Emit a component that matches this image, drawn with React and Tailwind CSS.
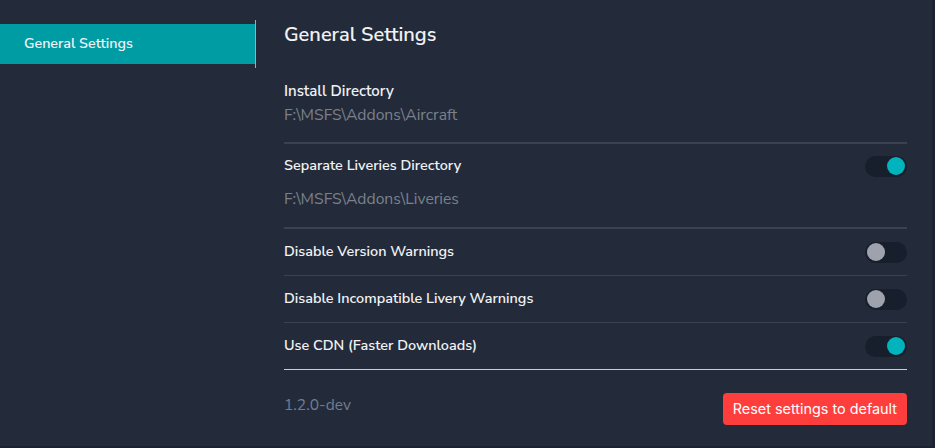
import React, { useState } from 'react';

const font = { fontFamily: '"Nunito Sans", Lato, "Open Sans", sans-serif' };

const Toggle = ({ on, onChange }) => (
  <button
    onClick={onChange}
    className="relative w-[42px] h-[21px] rounded-full bg-[#171e2c] shrink-0 focus:outline-none"
  >
    <span
      className={`absolute top-[1.5px] w-[18px] h-[18px] rounded-full transition-all ${
        on ? 'left-[22px] bg-[#00b3bd]' : 'left-[2px] bg-[#9ea2ac]'
      }`}
    />
  </button>
);

export default function App() {
  const [liveries, setLiveries] = useState(true);
  const [versionWarn, setVersionWarn] = useState(false);
  const [liveryWarn, setLiveryWarn] = useState(false);
  const [cdn, setCdn] = useState(true);

  const rows = [
    { label: 'Disable Version Warnings', on: versionWarn, set: setVersionWarn },
    { label: 'Disable Incompatible Livery Warnings', on: liveryWarn, set: setLiveryWarn },
    { label: 'Use CDN (Faster Downloads)', on: cdn, set: setCdn },
  ];

  return (
    <div
      className="flex w-[935px] h-[448px] bg-[#232b3b] border-r-[3px] border-b-2 border-[#1b2230] text-[#f1f2f4] overflow-hidden"
      style={font}
    >
      {/* Sidebar */}
      <div className="w-[256px] shrink-0 pt-[20px]">
        <div className="border-r border-[#a4a8b0] py-[4px]">
          <div className="h-[40px] bg-[#009ca4] flex items-center px-6 text-[14.3px] font-semibold">
            General Settings
          </div>
        </div>
      </div>

      {/* Content */}
      <div className="flex-1 pl-[28px] pr-[25px] pt-[21px]">
        <h1 className="text-[20px] leading-[28px] font-semibold">General Settings</h1>

        <div className="mt-[32px] pb-[17px] border-b-2 border-[#394254]">
          <div className="text-[15px] leading-[20px] font-semibold">Install Directory</div>
          <div className="mt-[4px] text-[15.7px] leading-[20px] text-[#7b808a]">F:\MSFS\Addons\Aircraft</div>
        </div>

        <div className="pt-[12px] pb-[18px] border-b-2 border-[#394254]">
          <div className="flex items-center justify-between h-[20px]">
            <span className="text-[14.4px] font-semibold">Separate Liveries Directory</span>
            <Toggle on={liveries} onChange={() => setLiveries(!liveries)} />
          </div>
          <div className="mt-[13px] text-[15.7px] leading-[20px] text-[#7b808a]">F:\MSFS\Addons\Liveries</div>
        </div>

        {rows.map((r, i) => (
          <div
            key={r.label}
            className={`h-[47px] flex items-center justify-between border-b ${
              i === rows.length - 1 ? 'border-[#c9ccd2]' : 'border-[#394254]'
            }`}
          >
            <span className="text-[14.4px] font-semibold">{r.label}</span>
            <Toggle on={r.on} onChange={() => r.set(!r.on)} />
          </div>
        ))}

        <div className="pt-[23px] flex items-start justify-between">
          <span className="mt-[2px] text-[15.5px] leading-[20px] text-[#6f7f92]">1.2.0-dev</span>
          <button
            className="h-[32px] px-[10px] rounded-[4px] bg-[#fe3d3d] text-[14.4px] text-white"
            style={{ fontFamily: 'Inter, "Noto Sans", sans-serif' }}
          >
            Reset settings to default
          </button>
        </div>
      </div>
    </div>
  );
}
